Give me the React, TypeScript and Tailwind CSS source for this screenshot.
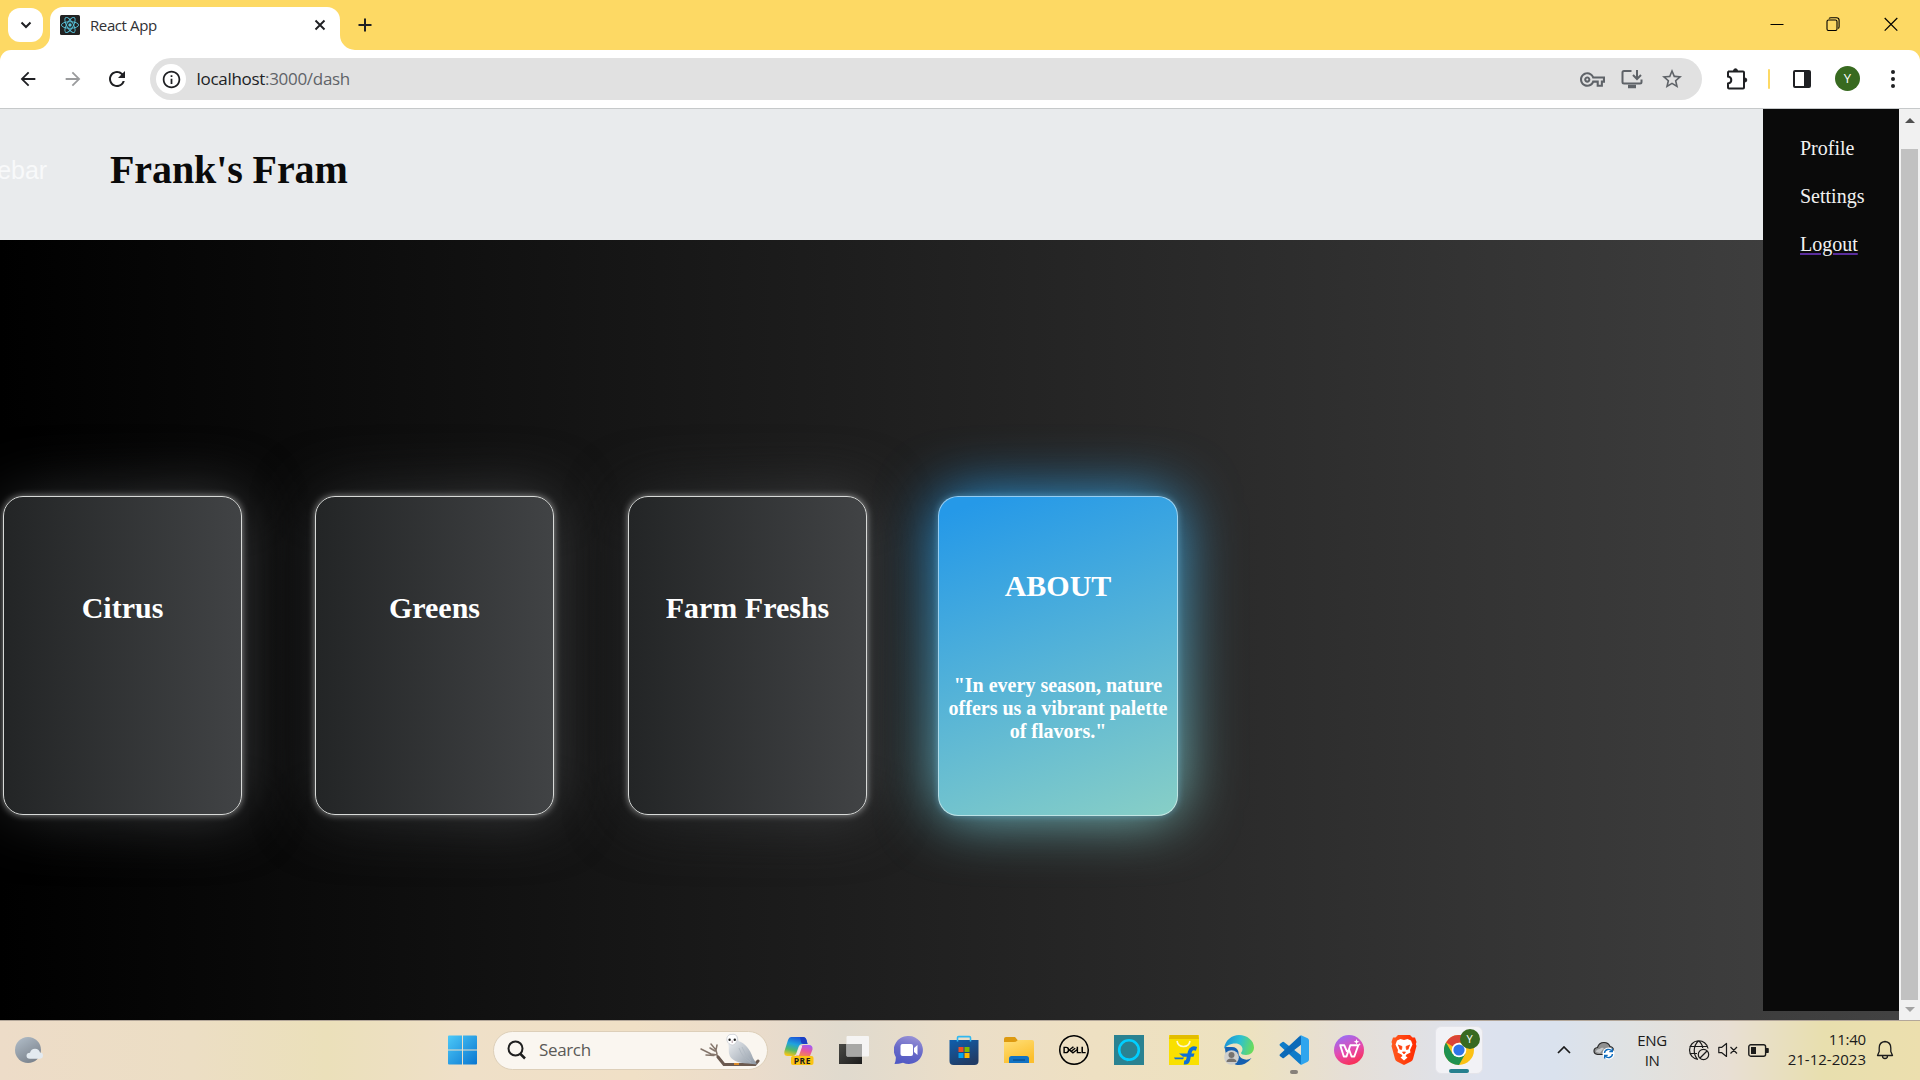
import React from "react";
import {
  MdArrowBack,
  MdArrowForward,
  MdRefresh,
  MdInfoOutline,
  MdOutlineVpnKey,
  MdStarBorder,
} from "react-icons/md";
import { SiDell } from "react-icons/si";

/* ---------- Browser chrome ---------- */

function ReactFavicon() {
  return (
    <svg viewBox="0 0 20 20" className="h-5 w-5 shrink-0">
      <rect width="20" height="20" rx="1.5" fill="#222" />
      <g fill="none" stroke="#58c4dc" strokeWidth="0.9">
        <ellipse cx="10" cy="10" rx="8.6" ry="3.3" />
        <ellipse cx="10" cy="10" rx="8.6" ry="3.3" transform="rotate(60 10 10)" />
        <ellipse cx="10" cy="10" rx="8.6" ry="3.3" transform="rotate(120 10 10)" />
      </g>
      <circle cx="10" cy="10" r="1.7" fill="#58c4dc" />
    </svg>
  );
}

function TabStrip() {
  return (
    <div className="flex h-[50px] shrink-0 bg-[#fdd964]">
      <button className="mt-2 ml-2 flex h-[34px] w-[35px] items-center justify-center rounded-xl bg-white">
        <svg viewBox="0 0 12 8" className="h-2 w-3" fill="none" stroke="#1f2023" strokeWidth="2">
          <path d="M1.5 1.5 6 6l4.500-4.500" />
        </svg>
      </button>
      <div className="relative mt-[7px] ml-[7px] flex h-[43px] w-[290px] rounded-t-[13px] bg-white">
        <svg viewBox="0 0 15 15" className="absolute bottom-0 -left-[15px] h-[15px] w-[15px]">
          <path d="M15 0v15H0A15 15 0 0 0 15 0Z" fill="#fff" />
        </svg>
        <svg viewBox="0 0 15 15" className="absolute -right-[15px] bottom-0 h-[15px] w-[15px]">
          <path d="M0 0v15h15A15 15 0 0 1 0 0Z" fill="#fff" />
        </svg>
        <div className="mt-2 ml-[10px] flex h-5 w-full items-center">
          <ReactFavicon />
          <span className="ml-[10px] text-[15px] tracking-[-0.4px] text-[#303134]">React App</span>
          <svg viewBox="0 0 12 12" className="mt-[-1px] mr-[14px] ml-auto h-3 w-3" stroke="#1f2023" strokeWidth="1.9">
            <path d="M1.500 1.500l9 9M10.500 1.500l-9 9" />
          </svg>
        </div>
      </div>
      <svg viewBox="0 0 14 14" className="mt-[18px] ml-[18px] h-[14px] w-[14px]" stroke="#1f2023" strokeWidth="2">
        <path d="M7 .5v13M.5 7h13" />
      </svg>
      <div className="mt-[17px] mr-[22px] ml-auto flex items-start">
        <svg viewBox="0 0 14 14" className="h-[14px] w-[14px]" stroke="#000" strokeWidth="1">
          <path d="M.5 7.500h13" />
        </svg>
        <svg viewBox="0 0 14 14" className="ml-[42px] h-[14px] w-[14px]" fill="none" stroke="#000" strokeWidth="1.100">
          <rect x="1" y="3" width="10" height="10.500" rx="1.500" />
          <path d="M3 1.500Q3.500 .7 5 .7h5.500q2.600 0 2.600 2.600v6.200q0 1.400-.8 2" />
        </svg>
        <svg viewBox="0 0 14 14" className="ml-[44px] h-[14px] w-[14px]" stroke="#000" strokeWidth="1.200">
          <path d="M.7 1l12.600 12.600M13.300 1 .7 13.600" />
        </svg>
      </div>
    </div>
  );
}

function Toolbar() {
  return (
    <div className="bg-[#fdd964]">
      <div className="flex h-[59px] shrink-0 items-center rounded-t-[11px] border-b border-[#c6c9ca] bg-white">
        <MdArrowBack className="ml-[17px] h-[22px] w-[22px] text-[#1f2023]" />
        <MdArrowForward className="ml-[23px] h-[22px] w-[22px] text-[#9a9b9d]" />
        <MdRefresh className="ml-[21px] h-6 w-6 text-[#1f2023]" />
        <div className="ml-[21px] flex h-[42px] w-[1552px] items-center rounded-full bg-[#e1e1e1]">
          <span className="ml-[6px] flex h-[30px] w-[30px] items-center justify-center rounded-full bg-white">
            <MdInfoOutline className="h-[21px] w-[21px] text-[#1f2023]" />
          </span>
          <span className="ml-[10.5px] text-[17px] tracking-[-0.3px] text-[#5f6368]">
            <span className="text-[#202124]">localhost</span>:3000/dash
          </span>
          <MdOutlineVpnKey className="ml-auto h-[25px] w-[25px] text-[#5f6368]" />
          <svg viewBox="0 0 22 20" className="ml-[16px] h-5 w-[22px]" fill="none" stroke="#5f6368" strokeWidth="2">
            <path d="M10.500 2H3q-1.500 0-1.500 1.500V13q0 1.500 1.500 1.500h16q1.500 0 1.500-1.500v-2.500" />
            <path d="M7 17.500h8" strokeWidth="3.500" />
            <path d="M16 1v8M12 6l4 4 4-4" />
          </svg>
          <MdStarBorder className="mr-[18px] ml-[17px] h-6 w-6 text-[#5f6368]" />
        </div>
        <svg viewBox="0 0 22 22" className="ml-6 h-[22px] w-[22px]" fill="none" stroke="#1f2023" strokeWidth="2">
          <path d="M2 3.500h15q1 0 1 1v15q0 1-1 1H3q-1 0-1-1V15.500q3.300-.6 3.300-3.500T2 8.600V4.500q0-1 1-1Z" />
          <path d="M7.500 2.800a2 2 0 0 1 4 0ZM18.800 10a2 2 0 0 1 0 4Z" fill="#1f2023" strokeWidth="1" />
        </svg>
        <span className="ml-5 h-5 w-[2px] rounded bg-[#fdd964]" />
        <svg viewBox="0 0 18 18" className="ml-[23px] h-[18px] w-[18px]">
          <rect x="1" y="1" width="16" height="16" rx="1" fill="none" stroke="#1f2023" strokeWidth="2" />
          <path d="M11 1h6v16h-6z" fill="#1f2023" />
        </svg>
        <span className="mb-px ml-6 flex h-[25px] w-[25px] items-center justify-center rounded-full bg-[#386a20] text-[13px] text-white">
          Y
        </span>
        <span className="ml-[31px] flex flex-col gap-[3px]">
          <span className="h-1 w-1 rounded-full bg-[#1f2023]" />
          <span className="h-1 w-1 rounded-full bg-[#1f2023]" />
          <span className="h-1 w-1 rounded-full bg-[#1f2023]" />
        </span>
      </div>
    </div>
  );
}

/* ---------- Web page ---------- */

function Card({ title }: { title: string }) {
  return (
    <div className="relative h-[319px] w-[239px] shrink-0">
      <div className="absolute inset-0 rounded-[20px] bg-[linear-gradient(90deg,#232526,#414345)] blur-[30px]" />
      <div className="relative flex h-full justify-center rounded-[20px] border border-[#d8dad8] bg-[linear-gradient(90deg,#232526,#414345)] pt-[94px] shadow-[0_0_7px_rgba(255,255,255,0.5)]">
        <h2 className="text-[30px] leading-[34px] font-bold whitespace-nowrap text-white">{title}</h2>
      </div>
    </div>
  );
}

function AboutCard() {
  return (
    <div className="relative h-[320px] w-[240px] shrink-0">
      <div className="absolute inset-0 rounded-[20px] bg-[linear-gradient(160deg,#2599e8_5%,#88cfc6_100%)] blur-[30px]" />
      <div className="relative flex h-full flex-col rounded-[20px] border border-white/50 bg-[linear-gradient(160deg,#2599e8_5%,#88cfc6_100%)] bg-origin-border pt-[72px] text-center font-bold text-white shadow-[0_0_7px_rgba(120,200,240,0.45)]">
        <h2 className="text-[30px] leading-[34px]">ABOUT</h2>
        <p className="mt-[71px] text-[20px] leading-[23px] whitespace-nowrap">
          "In every season, nature
          <br />
          offers us a vibrant palette
          <br />
          of flavors."
        </p>
      </div>
    </div>
  );
}

function Page() {
  return (
    <div className="flex h-[911px] shrink-0 overflow-hidden bg-[linear-gradient(90deg,#000,#434343)] [font-family:'Liberation_Serif',serif]">
      <main className="flex w-[1763px] shrink-0 flex-col">
        <header className="flex h-[131px] shrink-0 items-start bg-[#e9ebed]">
          <div className="flex w-[110px] shrink-0 overflow-hidden">
            <span className="mt-[45px] -ml-[39px] [font-family:'Liberation_Sans',sans-serif] text-[25px] leading-[32px] text-[#f8f9fa]">
              Sidebar
            </span>
          </div>
          <h1 className="mt-[38px] text-[40px] leading-[46px] font-bold tracking-[-0.1px] text-[#0a0a0a]">
            Frank's Fram
          </h1>
        </header>
        <section className="mt-[256px] flex pl-[3px]">
          <Card title="Citrus" />
          <div className="w-[73px] shrink-0" />
          <Card title="Greens" />
          <div className="w-[74px] shrink-0" />
          <Card title="Farm Freshs" />
          <div className="w-[71px] shrink-0" />
          <AboutCard />
        </section>
      </main>
      <aside className="h-[902px] w-[136px] shrink-0 bg-[#0a0a0a] pt-[15px] pl-[37px] text-[20px] leading-[48px] text-[#f1f1f1]">
        <div>Profile</div>
        <div>Settings</div>
        <div className="underline decoration-[#5a2d9c] decoration-2 underline-offset-2">Logout</div>
      </aside>
      <div className="flex h-full w-[21px] shrink-0 flex-col items-center bg-[#f1f1f1]">
        <span className="mt-[9px] h-0 w-0 border-x-[5px] border-b-[5px] border-x-transparent border-b-[#505050]" />
        <span className="mt-[26px] h-[851px] w-[17px] bg-[#c1c1c1]" />
        <span className="mt-[7px] h-0 w-0 border-x-[5px] border-t-[5px] border-x-transparent border-t-[#a3a3a3]" />
      </div>
    </div>
  );
}

/* ---------- Taskbar ---------- */

function Owl() {
  return (
    <svg viewBox="0 0 60 34" className="h-[34px] w-[60px]">
      <defs>
        <linearGradient id="wing" x1="0" y1="0" x2="1" y2="1">
          <stop offset="0" stopColor="#fafbfc" />
          <stop offset="1" stopColor="#8d98a5" />
        </linearGradient>
      </defs>
      <g fill="none" stroke="#85766c" strokeLinecap="round">
        <path d="M1 16 11 21 17 22 24 31M6 22l8 .500M11 11l5 6 1 4M10 15l5 3M17 12l-1 5" strokeWidth="1.500" />
        <path d="M18 24 24 31.500 55 31.500 58 28" strokeWidth="3" stroke="#6b5a50" />
      </g>
      <path d="M27 8C26 2 30 .8 33 1c4 .3 5.500 3.500 5.500 7C45 10 50 16 53 25l4 6.500-9-1C38 30 30.500 27.500 29 20.500 28.500 16 29.500 12 27 8Z" fill="url(#wing)" />
      <path d="M26.800 7c-.3-4 2.500-6 5-5.500 3-1 6 1 5.500 5-.6 3.500-3 5.500-5 5.500s-5-2-5.500-5Z" fill="#fff" stroke="#c3c6cc" strokeWidth=".7" />
      <circle cx="29.600" cy="6.800" r="1.200" fill="#222" />
      <circle cx="34.800" cy="6.800" r="1.200" fill="#222" />
      <path d="M32.200 7.500v2.500" stroke="#a0808a" strokeWidth=".8" />
      <path d="M39 15q3 9 12 15M42 14q3 8 9 14" fill="none" stroke="#aeb7c0" strokeWidth=".8" />
      <path d="M34 31h5" stroke="#d98a2b" strokeWidth="2" />
    </svg>
  );
}

function CopilotIcon() {
  return (
    <svg viewBox="0 0 30 30" className="h-[30px] w-[30px]">
      <defs>
        <linearGradient id="cpA" x1="0.6" y1="0" x2="0.3" y2="1">
          <stop offset="0" stopColor="#1b52d8" />
          <stop offset=".4" stopColor="#1fa3dd" />
          <stop offset=".7" stopColor="#52b96a" />
          <stop offset="1" stopColor="#f5c518" />
        </linearGradient>
        <linearGradient id="cpB" x1="0.7" y1="0" x2="0.3" y2="1">
          <stop offset="0" stopColor="#a45cf5" />
          <stop offset=".5" stopColor="#e6569f" />
          <stop offset="1" stopColor="#f58a4a" />
        </linearGradient>
      </defs>
      <path d="M7 2h12q2.500 0 3.500 3l1 4h-5q-3 0-4 3l-2.500 7q-1 2-3 2H3.500q-4 0-3-5L4 5q1-3 3-3Z" fill="url(#cpA)" />
      <path d="M16 2h3q2.500 0 3.500 3l1 4h-4q-2 0-2.500-2Z" fill="#1b3fc4" />
      <path d="M20 10h5q4 0 3.500 4.500L26 21H12l4-8q1-3 4-3Z" fill="url(#cpB)" />
      <path d="M17 10.500q1.500 0 1 1.500l-3 8.500h-3l3-8q.600-2 2-2Z" fill="#f3e6e8" />
      <rect x="7" y="21" width="22.500" height="9" rx="2" fill="#fbc314" />
      <text x="18.400" y="28.700" textAnchor="middle" fontSize="8.500" fontWeight="bold" fill="#1b1b1b" fontFamily="Open Sans, sans-serif" letterSpacing=".5">
        PRE
      </text>
    </svg>
  );
}

function TaskViewIcon() {
  return (
    <svg viewBox="0 0 30 30" className="h-[30px] w-[30px]">
      <defs>
        <linearGradient id="tvA" x1="0" y1="0" x2="1" y2="1">
          <stop offset="0" stopColor="#4a4a46" />
          <stop offset="1" stopColor="#1c1c1c" />
        </linearGradient>
      </defs>
      <path d="M0 9h23v20H0z" fill="url(#tvA)" />
      <rect x="7.500" y="1" width="22.500" height="20.500" rx="1" fill="#f6f6f6" fillOpacity=".92" />
      <path d="M7.500 9H23v12.500H8.500q-1 0-1-1z" fill="#a8a8a6" />
    </svg>
  );
}

function ChatIcon() {
  return (
    <svg viewBox="0 0 30 30" className="h-[30px] w-[30px]">
      <defs>
        <linearGradient id="chA" x1="0.700" y1="0" x2="0.400" y2="1">
          <stop offset="0" stopColor="#9a93d6" />
          <stop offset=".5" stopColor="#6a6bc9" />
          <stop offset="1" stopColor="#5059c4" />
        </linearGradient>
      </defs>
      <path d="M15 1a14 14 0 1 1-6 26.700Q5 29 .5 29q1.500-3 1.300-7A14 14 0 0 1 15 1Z" fill="url(#chA)" />
      <rect x="6.500" y="9" width="12.500" height="12" rx="2" fill="#fff" />
      <path d="m20 13 3.500-3v10L20 17z" fill="#fff" />
    </svg>
  );
}

function StoreIcon() {
  return (
    <svg viewBox="0 0 30 30" className="h-[30px] w-[30px]">
      <defs>
        <linearGradient id="stA" x1="0" y1="0" x2="0.500" y2="1">
          <stop offset="0" stopColor="#0f5fae" />
          <stop offset="1" stopColor="#203c66" />
        </linearGradient>
      </defs>
      <path d="M.5 5h29v21q0 4-4 4h-21q-4 0-4-4z" fill="url(#stA)" />
      <path d="M8.500 6.500V2.800q0-1.200 1.200-1.200h10.600q1.200 0 1.200 1.200V6.500" fill="none" stroke="#31b8f0" strokeWidth="1.600" />
      <path d="M9.500 12h5v5h-5z" fill="#f25022" />
      <path d="M15.500 12h5v5h-5z" fill="#7fba00" />
      <path d="M9.500 18h5v5h-5z" fill="#00a4ef" />
      <path d="M15.500 18h5v5h-5z" fill="#ffb900" />
    </svg>
  );
}

function FolderIcon() {
  return (
    <svg viewBox="0 0 30 30" className="h-[30px] w-[30px]">
      <defs>
        <linearGradient id="foA" x1="0" y1="0" x2="0.500" y2="1">
          <stop offset="0" stopColor="#ffdf78" />
          <stop offset="1" stopColor="#fcbf2d" />
        </linearGradient>
      </defs>
      <path d="M0 9V4q0-2 2-2h9l3 3.500L11 9z" fill="#dd9a10" />
      <path d="M0 7h10q2 0 3.500-1.500L14 5h14q2 0 2 2v21H0z" fill="url(#foA)" />
      <path d="M5 28v-4.500q0-2.500 2.500-2.500h15q2.500 0 2.500 2.500V28z" fill="#1173c4" />
      <path d="M9 25h12" stroke="#0a4a86" strokeWidth="1.200" />
    </svg>
  );
}

function AlexaIcon() {
  return (
    <svg viewBox="0 0 30 30" className="h-[30px] w-[30px]">
      <path d="M0 0h30v30H0z" fill="#2a8291" />
      <path d="M13 25.500v-2A8.800 8.800 0 1 0 6 15q0 3 1.500 5" fill="none" />
      <circle cx="15" cy="15" r="9.800" fill="none" stroke="#00cfff" strokeWidth="2.600" />
      <path d="M12.800 23v3.500l4.500-2z" fill="#00cfff" />
    </svg>
  );
}

function FlipkartIcon() {
  return (
    <svg viewBox="0 0 30 30" className="h-[30px] w-[30px]">
      <path d="M0 0h30v30H0z" fill="#f9e000" />
      <path d="M1 0h28l1 4H0z" fill="#e3bd00" />
      <path d="M8 6q1 5.500 6.500 5.500T21 6" fill="none" stroke="#fff8cf" strokeWidth="1.600" />
      <path d="M27.500 13.800q-5.500-1.800-6.700 3.200l-1.600 7.500q-.7 3.500-4.200 3" fill="none" stroke="#0f6fd6" strokeWidth="3.900" />
      <path d="M10 18.500h15.500l-1 3.200H14zM5 22.500h10l-1 1.800H6z" fill="#0f6fd6" />
    </svg>
  );
}

function EdgeIcon() {
  return (
    <svg viewBox="0 0 30 30" className="h-[30px] w-[30px]">
      <defs>
        <linearGradient id="edA" x1="0" y1="0.300" x2="1" y2="0.500">
          <stop offset="0" stopColor="#1a8fd6" />
          <stop offset=".5" stopColor="#2cc0d2" />
          <stop offset="1" stopColor="#6bdc5a" />
        </linearGradient>
      </defs>
      <path d="M1 12Q4 12 8 12 13 12 14.500 17 14 21 18 23.500 23 26 27.500 23A15 15 0 0 1 12 29.700Q1 26 1 12Z" fill="#1660b0" />
      <path d="M0 14C1 5 8 0 15 0c8 0 15 5.500 15 12.500 0 4.500-3.500 7.500-8 7.500-3 0-5-.8-5-2 0-.8 1.500-1.500 1.500-4 0-3-3-5.500-7-5.500C6 8.500 2 11 0 14Z" fill="url(#edA)" />
      <circle cx="7.500" cy="22.500" r="7.300" fill="#cfcfcd" />
      <circle cx="7.500" cy="20" r="3" fill="#77736f" />
      <path d="M2.500 27q0-3.500 5-3.500t5 3.500z" fill="#77736f" />
    </svg>
  );
}

function VSCodeIcon() {
  return (
    <svg viewBox="0 0 30 30" className="h-[30px] w-[30px]">
      <path d="M1.800 8.300 3.500 7q.7-.4 1.400.1L23 21v7.500q-1.200 1-2.500.2L1 10.800q-1.200-1.300.8-2.500Z" fill="#0f7cc9" />
      <path d="M1.800 21.700 3.500 23q.7.400 1.400-.1L23 9V1.500q-1.200-1-2.500-.2L1 19.200q-1.200 1.300.8 2.500Z" fill="#0b6ab8" />
      <path d="M22 .3 28.700 3.300q1.300.7 1.300 2.200v19q0 1.500-1.300 2.200L22 29.900q-.8 0-1.600-.7 1.600.8 1.600-1.200V2q0-2-1.600-1.200Z" fill="#2fa5ee" />
    </svg>
  );
}

function WpsIcon() {
  return (
    <svg viewBox="0 0 30 30" className="h-[30px] w-[30px]">
      <defs>
        <linearGradient id="wpA" x1="0.300" y1="0" x2="0.700" y2="1">
          <stop offset="0" stopColor="#9a6df5" />
          <stop offset=".5" stopColor="#e44bb0" />
          <stop offset="1" stopColor="#fb2c4c" />
        </linearGradient>
      </defs>
      <circle cx="15" cy="15" r="15" fill="url(#wpA)" />
      <path
        d="M5.500 10.300h4.800l2.800 6.500M6.200 10.300l3.600 11.200h2.700l3.800-11.200h8l-4 11.200h-2.700l-2.800-7.500"
        fill="none"
        stroke="#fff"
        strokeWidth="1.900"
        strokeLinejoin="round"
      />
      <path d="m22.500 4 .8 2 2 .8-2 .8-.8 2-.8-2-2-.8 2-.8zM25.500 8l.4 1 1 .4-1 .4-.4 1-.4-1-1-.4 1-.4z" fill="#fff" />
    </svg>
  );
}

function BraveIcon() {
  return (
    <span className="flex h-[30px] w-[30px] items-center justify-center">
      <svg viewBox="0 0 26 30" className="h-[30px] w-[26px]">
        <defs>
          <linearGradient id="brA" x1="0" y1="0" x2="1" y2="0">
            <stop offset="0" stopColor="#ff5a1f" />
            <stop offset="1" stopColor="#ff2a00" />
          </linearGradient>
        </defs>
        <path d="M7 0h12l2.500 2.500H24L25.500 7l-.7 2 .7 2-3.500 13q-.5 1.500-2 2.500l-7 3.500-7-3.500q-1.500-1-2-2.500L.5 11l.7-2-.7-2L2 2.500h2.500z" fill="url(#brA)" />
        <path d="m13 5 3.500-1 3.500 1.500 1.500 4-2.500 5.500.5 2.500-4 2-1 1.500 2 1.500-3.500 3-3.500-3 2-1.500-1-1.500-4-2 .5-2.500L4.500 9.500 6 5.500 9.500 4z" fill="#fff" />
        <path d="m7 10 4 1.500-.5 3-2-.5M19 10l-4 1.500.5 3 2-.5M11.500 17h3L13 19z" fill="#ff4412" stroke="#ff4412" strokeWidth=".8" />
      </svg>
    </span>
  );
}

function ChromeIcon() {
  return (
    <svg viewBox="0 0 30 30" className="h-[30px] w-[30px]">
      <circle cx="15" cy="15" r="15" fill="#fbc116" />
      <path d="M15 15 2 7.500A15 15 0 0 1 28 7.500H15z" fill="#db4437" />
      <path d="M2 7.500A15 15 0 0 0 15 30l6.500-11.500L15 15 8.500 18.700z" fill="#1e9150" />
      <circle cx="15" cy="15" r="7.300" fill="#fff" />
      <circle cx="15" cy="15" r="5.600" fill="#2f75e8" />
    </svg>
  );
}

function Slot({ children }: { children: React.ReactNode }) {
  return <div className="flex h-[60px] w-[55px] shrink-0 items-center justify-center">{children}</div>;
}

function Tray() {
  return (
    <div className="ml-auto flex h-[60px] shrink-0 items-center text-[#1b1b1b]">
      <svg viewBox="0 0 14 8" className="h-2 w-[14px]" fill="none" stroke="#1b1b1b" strokeWidth="1.700">
        <path d="M1 7l6-6 6 6" />
      </svg>
      <svg viewBox="0 0 22 20" className="ml-[22px] h-5 w-[22px]">
        <path d="M4.500 14.500Q1 14 1 11t3.500-3.500Q6 2.500 11 2.500q4.500 0 6 4 3.500.5 3.500 4t-3 4z" fill="#8f9091" stroke="#2b2b2b" strokeWidth="1.200" />
        <path d="M3 12q0-3 4-3 1-2 4-1l-4 5z" fill="#c7c9ca" />
        <circle cx="15.500" cy="13.500" r="6" fill="#fff" />
        <g fill="none" stroke="#0f6cbd" strokeWidth="1.400">
          <path d="M11.500 13a4 4 0 0 1 7.300-1.800M19.500 14a4 4 0 0 1-7.300 1.800" />
          <path d="M19.300 8.600v3h-3M11.700 18.400v-3h3" />
        </g>
      </svg>
      <div className="mb-px ml-[17px] w-10 text-center text-[15px] leading-[20px] tracking-[-0.4px]">
        ENG
        <br />
        IN
      </div>
      <svg viewBox="0 0 22 22" className="ml-[16px] h-[22px] w-[22px]" fill="none" stroke="#1b1b1b" strokeWidth="1.200">
        <path d="M20 9.500A9.300 9.300 0 1 0 10 20.300M1.500 7.500h18M1.500 14.500H9M10.500 1.700C5 7 5 15 9.500 20.300M10.500 1.700Q14.500 5 14.700 9" />
        <circle cx="15.500" cy="15.500" r="5.200" />
        <path d="m12 19 7-7" />
      </svg>
      <svg viewBox="0 0 20 16" className="ml-2 h-4 w-5" fill="none" stroke="#1b1b1b" strokeWidth="1.200">
        <path d="M.8 5.300h3L8.500 1.500v13L3.800 10.700h-3zM12.500 5l6.500 6.500M19 5l-6.500 6.500" strokeLinejoin="round" />
      </svg>
      <svg viewBox="0 0 21 13" className="ml-[10px] h-[13px] w-[21px]">
        <rect x=".8" y=".8" width="16.800" height="11.400" rx="2" fill="none" stroke="#1b1b1b" strokeWidth="1.400" />
        <path d="M3 3h5v7H3zM18 4h2q.8 0 .8.800v3.400q0 .8-.8.800h-2z" fill="#1b1b1b" />
      </svg>
      <div className="mb-[3px] ml-[17px] w-[80px] text-right text-[15px] leading-[20px] whitespace-nowrap">
        <div className="tracking-[-0.2px]">11:40</div>
        <div>21-12-2023</div>
      </div>
      <svg viewBox="0 0 18 20" className="mr-[26px] ml-[10px] h-5 w-[18px]" fill="none" stroke="#1b1b1b" strokeWidth="1.300">
        <path d="M9 1.500q5.800.5 5.800 6.500v3.500L16.500 15.500h-15L3.200 11.500V8Q3.200 2 9 1.500ZM6.500 16a2.500 2.500 0 0 0 5 0" strokeLinejoin="round" />
      </svg>
    </div>
  );
}

function Taskbar() {
  return (
    <div className="flex h-[60px] shrink-0 items-center bg-[linear-gradient(90deg,#eddcc8_0%,#ecdec4_10%,#ebe0ba_17%,#efe0c8_24%,#f0e0c6_33%,#ebdccb_39%,#e0dace_44%,#ebdec8_50%,#eee0c2_57%,#ede2bf_65%,#e6dfd6_70%,#dde2ee_77%,#dae2ee_81%,#e0e2e2_85%,#e8dfd4_90%,#e8dfae_95%,#ecdfae_100%)] shadow-[inset_0_1px_0_#b3a79a]">
      <svg viewBox="0 0 30 28" className="ml-[14px] h-7 w-[30px] shrink-0">
        <defs>
          <linearGradient id="moon" x1="0" y1="0" x2="0.600" y2="1">
            <stop offset="0" stopColor="#b3bfca" />
            <stop offset="1" stopColor="#7c848e" />
          </linearGradient>
        </defs>
        <circle cx="14" cy="14" r="13" fill="url(#moon)" />
        <path d="M16 22.800q-3.500 0-3.500-3t3.500-3q1-4 5-4t5 3.800q3 .2 3 3t-3 3.200z" fill="#e3eaf0" />
      </svg>
      <svg viewBox="0 0 30 30" className="ml-[404px] h-[30px] w-[30px] shrink-0">
        <defs>
          <linearGradient id="win" x1="0" y1="0" x2="1" y2="1">
            <stop offset="0" stopColor="#4cc9f8" />
            <stop offset="1" stopColor="#0a76d0" />
          </linearGradient>
        </defs>
        <path d="M0 1.500Q0 .5 1 .5h13v14H0zM15 .5h13q1 0 1 1v13H15zM0 15.500h14v14H1q-1 0-1-1zM15 15.500h14v13q0 1-1 1H15z" fill="url(#win)" />
      </svg>
      <div className="ml-[15px] flex h-[39px] w-[275px] shrink-0 items-center rounded-full border border-[#ddcfb9] bg-[#faf6f0]">
        <svg viewBox="0 0 20 20" className="ml-[13px] h-5 w-5" fill="none" stroke="#1f1f1f" strokeWidth="2">
          <circle cx="8.500" cy="8.500" r="7" />
          <path d="m13 13.500 5 5" strokeWidth="2.500" />
        </svg>
        <span className="ml-[12px] text-[17px] tracking-[-0.35px] text-[#5b5a57]">Search</span>
        <div className="mr-[7px] ml-auto">
          <Owl />
        </div>
      </div>
      <div className="ml-[3px] flex">
        <Slot><CopilotIcon /></Slot>
        <Slot><TaskViewIcon /></Slot>
        <Slot><ChatIcon /></Slot>
        <Slot><StoreIcon /></Slot>
        <Slot><FolderIcon /></Slot>
        <Slot><SiDell className="h-[30px] w-[30px] text-black" /></Slot>
        <Slot><AlexaIcon /></Slot>
        <Slot><FlipkartIcon /></Slot>
        <Slot><EdgeIcon /></Slot>
        <Slot>
          <div className="relative">
            <VSCodeIcon />
            <span className="absolute -bottom-[9px] left-[11px] h-1 w-2 rounded-full bg-[#86807a]" />
          </div>
        </Slot>
        <Slot><WpsIcon /></Slot>
        <Slot><BraveIcon /></Slot>
        <Slot>
          <div className="relative flex h-12 w-12 shrink-0 items-center justify-center rounded-md border border-[#e4e4ea] bg-[#f2f2f6]">
            <ChromeIcon />
            <span className="absolute top-[2px] right-[2px] flex h-5 w-5 items-center justify-center rounded-full bg-[#386a20] text-[11px] text-white">
              Y
            </span>
            <span className="absolute bottom-0 left-[13px] h-1 w-5 rounded-full bg-[#26808f]" />
          </div>
        </Slot>
      </div>
      <Tray />
    </div>
  );
}

export default function App() {
  return (
    <div className="flex h-[1080px] w-[1920px] flex-col overflow-hidden [font-family:'Open_Sans',sans-serif]">
      <TabStrip />
      <Toolbar />
      <Page />
      <Taskbar />
    </div>
  );
}
